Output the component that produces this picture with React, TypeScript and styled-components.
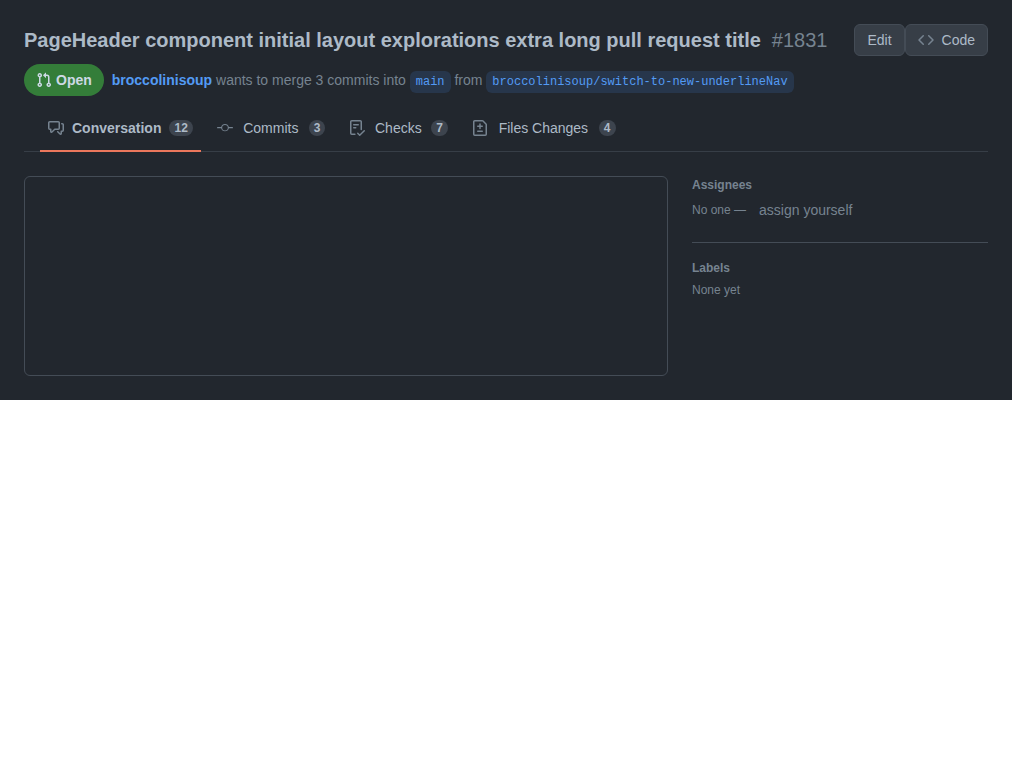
import React from "react";
import styled, { createGlobalStyle } from "styled-components";

const GlobalStyle = createGlobalStyle`
  *, *::before, *::after { box-sizing: border-box; }
  body {
    margin: 0;
    background: #ffffff;
    font-family: "Liberation Sans", Arial, sans-serif;
    font-size: 14px;
    line-height: 20px;
  }
`;

const Page = styled.div`
  display: flex;
  flex-direction: column;
  gap: 24px;
  padding: 24px;
  background: #22272e;
  color: #adbac7;
`;

const Header = styled.header`
  display: flex;
  flex-direction: column;
  gap: 8px;
`;

const TitleRow = styled.div`
  display: flex;
  align-items: flex-start;
`;

const Title = styled.h1`
  flex: 1;
  margin: 0;
  font-size: 20px;
  line-height: 32px;
  font-weight: 700;
`;

const Number = styled.span`
  margin-left: 11px;
  color: #768390;
  font-weight: 400;
`;

const Actions = styled.div`
  display: flex;
`;

const Button = styled.button`
  display: inline-flex;
  align-items: center;
  gap: 8px;
  height: 32px;
  padding: 0 12px;
  border: 1px solid #444c56;
  border-radius: 6px;
  background: #373e47;
  color: #adbac7;
  font: inherit;
  cursor: pointer;
`;

const Icon = styled.svg<{ $color?: string }>`
  flex: none;
  width: 16px;
  height: 16px;
  fill: ${(p) => p.$color ?? "#768390"};
`;

const Description = styled.div`
  display: flex;
  align-items: baseline;
  gap: 8px;
  color: #768390;
`;

const State = styled.span`
  display: inline-flex;
  align-items: center;
  gap: 4px;
  height: 32px;
  padding: 0 12px;
  border-radius: 16px;
  background: #347d39;
  color: #cdd9e5;
  font-weight: 700;
`;

/* Gives the badge its text baseline, which the summary beside it sits on. */
const StateLabel = styled.span`
  align-self: baseline;
  line-height: 32px;
`;

const Summary = styled.span`
  line-height: 20px;
`;

const Author = styled.a`
  color: #539bf5;
  font-weight: 700;
  text-decoration: none;
`;

const Branch = styled.a`
  display: inline-block;
  padding: 2px 6px;
  border-radius: 6px;
  background: #27364b;
  color: #539bf5;
  font-family: "Liberation Mono", monospace;
  font-size: 12px;
  line-height: 18px;
  text-decoration: none;
`;

const Tabs = styled.nav`
  display: flex;
  gap: 8px;
  height: 48px;
  padding-left: 16px;
  box-shadow: inset 0 -1px #373e47;
`;

const Tab = styled.a<{ $current: boolean }>`
  display: flex;
  align-items: center;
  gap: 8px;
  padding: 0 8px;
  color: #adbac7;
  font-weight: ${(p) => (p.$current ? 700 : 400)};
  text-decoration: none;
  box-shadow: ${(p) => (p.$current ? "inset 0 -2px #ec775c" : "none")};
`;

/* Reserves the bold width so that the tabs keep their size when selected. */
const TabLabel = styled.span`
  display: inline-flex;
  flex-direction: column;
  align-items: center;

  &::after {
    content: attr(data-label);
    height: 0;
    font-weight: 700;
    visibility: hidden;
  }
`;

const Counter = styled.span`
  padding: 2px 5px;
  border-radius: 8px;
  background: #3d444e;
  font-size: 12px;
  line-height: 12px;
  font-weight: 700;
`;

const Columns = styled.div`
  display: flex;
  align-items: flex-start;
  gap: 24px;
`;

const Content = styled.main`
  flex: 1;
  height: 200px;
  border: 1px solid #444c56;
  border-radius: 6px;
`;

const Sidebar = styled.aside`
  width: 296px;
  color: #768390;
  font-size: 12px;
  line-height: 18px;
`;

const Section = styled.section`
  & + & {
    margin-top: 16px;
    padding-top: 16px;
    border-top: 1px solid #444c56;
  }
`;

const SectionTitle = styled.h2`
  margin: 0;
  font-size: 12px;
  line-height: 18px;
  font-weight: 700;
`;

const AssigneeRow = styled.div`
  display: flex;
  align-items: center;
`;

const AssignButton = styled.button`
  height: 32px;
  padding: 0 12px;
  border: 1px solid transparent;
  border-radius: 6px;
  background: transparent;
  color: inherit;
  font: inherit;
  font-size: 14px;
  cursor: pointer;
`;

const Empty = styled.p`
  margin: 4px 0 0;
`;

const paths = {
  pull: "M7.177 3.073L9.573.677A.25.25 0 0110 .854v4.792a.25.25 0 01-.427.177L7.177 3.427a.25.25 0 010-.354zM3.75 2.5a.75.75 0 100 1.5.75.75 0 000-1.5zm-2.25.75a2.25 2.25 0 113 2.122v5.256a2.251 2.251 0 11-1.5 0V5.372A2.25 2.25 0 011.5 3.25zM11 2.5h-1V4h1a1 1 0 011 1v5.628a2.251 2.251 0 101.5 0V5A2.5 2.5 0 0011 2.5zm1 10.25a.75.75 0 111.5 0 .75.75 0 01-1.5 0zM3.75 12a.75.75 0 100 1.5.75.75 0 000-1.5z",
  discussion: "M1.75 1h8.5c.966 0 1.75.784 1.75 1.75v5.5A1.75 1.75 0 0 1 10.25 10H7.061l-2.574 2.573A1.458 1.458 0 0 1 2 11.543V10h-.25A1.75 1.75 0 0 1 0 8.25v-5.5C0 1.784.784 1 1.75 1ZM1.5 2.75v5.5c0 .138.112.25.25.25h1a.75.75 0 0 1 .75.75v2.19l2.72-2.72a.749.749 0 0 1 .53-.22h3.5a.25.25 0 0 0 .25-.25v-5.5a.25.25 0 0 0-.25-.25h-8.5a.25.25 0 0 0-.25.25Zm13 2a.25.25 0 0 0-.25-.25h-.5a.75.75 0 0 1 0-1.5h.5c.966 0 1.75.784 1.75 1.75v5.5A1.75 1.75 0 0 1 14.25 12H14v1.543a1.458 1.458 0 0 1-2.487 1.03L9.22 12.28a.749.749 0 0 1 .326-1.275.749.749 0 0 1 .734.215l2.22 2.22v-2.19a.75.75 0 0 1 .75-.75h1a.25.25 0 0 0 .25-.25Z",
  commit: "M11.87 8.3a4 4 0 0 1-7.74 0H.6a.6.6 0 0 1 0-1.2h3.53a4 4 0 0 1 7.74 0h3.53a.6.6 0 0 1 0 1.2Zm-1.07-.6a2.8 2.8 0 1 0-5.6 0 2.8 2.8 0 0 0 5.6 0Z",
  checklist: "M2.5 1.75v11.5c0 .138.112.25.25.25h3.17a.75.75 0 0 1 0 1.5H2.75A1.75 1.75 0 0 1 1 13.25V1.75C1 .784 1.784 0 2.75 0h8.5C12.216 0 13 .784 13 1.75v7.736a.75.75 0 0 1-1.5 0V1.75a.25.25 0 0 0-.25-.25h-8.5a.25.25 0 0 0-.25.25Zm13.274 9.537v-.001l-4.557 4.45a.75.75 0 0 1-1.055-.008l-1.943-1.95a.75.75 0 0 1 1.062-1.058l1.419 1.425 4.026-3.932a.75.75 0 1 1 1.048 1.074ZM4.75 4h4.5a.75.75 0 0 1 0 1.5h-4.5a.75.75 0 0 1 0-1.5ZM4 7.75A.75.75 0 0 1 4.75 7h2a.75.75 0 0 1 0 1.5h-2A.75.75 0 0 1 4 7.75Z",
  diff: "M2.75 1.5a.25.25 0 0 0-.25.25v12.5c0 .138.112.25.25.25h10.5a.25.25 0 0 0 .25-.25V4.664a.25.25 0 0 0-.073-.177l-2.914-2.914a.25.25 0 0 0-.177-.073ZM1 1.75C1 .784 1.784 0 2.75 0h7.586c.464 0 .909.184 1.237.513l2.914 2.914c.329.328.513.773.513 1.237v9.586A1.75 1.75 0 0 1 13.25 16H2.75A1.75 1.75 0 0 1 1 14.25Zm7 1.5a.75.75 0 0 1 .75.75v1.5h1.5a.75.75 0 0 1 0 1.5h-1.5v1.5a.75.75 0 0 1-1.5 0V7h-1.5a.75.75 0 0 1 0-1.5h1.5V4A.75.75 0 0 1 8 3.25Zm-3 8a.75.75 0 0 1 .75-.75h4.5a.75.75 0 0 1 0 1.5h-4.5a.75.75 0 0 1-.75-.75Z",
  code: "m11.28 3.22 4.25 4.25a.75.75 0 0 1 0 1.06l-4.25 4.25a.749.749 0 0 1-1.275-.326.749.749 0 0 1 .215-.734L13.94 8l-3.72-3.72a.749.749 0 0 1 .326-1.275.749.749 0 0 1 .734.215Zm-6.56 0a.751.751 0 0 1 1.042.018.751.751 0 0 1 .018 1.042L2.06 8l3.72 3.72a.749.749 0 0 1-.326 1.275.749.749 0 0 1-.734-.215L.47 8.53a.75.75 0 0 1 0-1.06Z",
};

type IconName = keyof typeof paths;

function Octicon({ name, color }: { name: IconName; color?: string }) {
  return (
    <Icon viewBox="0 0 16 16" aria-hidden="true" $color={color}>
      <path fillRule="evenodd" d={paths[name]} />
    </Icon>
  );
}

const tabs: { label: string; count: number; icon: IconName }[] = [
  { label: "Conversation", count: 12, icon: "discussion" },
  { label: "Commits", count: 3, icon: "commit" },
  { label: "Checks", count: 7, icon: "checklist" },
  { label: "Files Changes", count: 4, icon: "diff" },
];

export default function App() {
  return (
    <>
      <GlobalStyle />
      <Page>
        <Header>
          <TitleRow>
            <Title>
              PageHeader component initial layout explorations extra long pull request title
              <Number>#1831</Number>
            </Title>
            <Actions>
              <Button type="button">Edit</Button>
              <Button type="button">
                <Octicon name="code" />
                Code
              </Button>
            </Actions>
          </TitleRow>
          <Description>
            <State>
              <Octicon name="pull" color="#cdd9e5" />
              <StateLabel>Open</StateLabel>
            </State>
            <Summary>
              <Author href="#author">broccolinisoup</Author> wants to merge 3 commits into{" "}
              <Branch href="#main">main</Branch> from{" "}
              <Branch href="#branch">broccolinisoup/switch-to-new-underlineNav</Branch>
            </Summary>
          </Description>
          <Tabs aria-label="Pull request">
            {tabs.map((tab, i) => (
              <Tab
                key={tab.label}
                href={"#tab-" + i}
                $current={i === 0}
                aria-current={i === 0 ? "page" : undefined}
              >
                <Octicon name={tab.icon} />
                <TabLabel data-label={tab.label}>{tab.label}</TabLabel>
                <Counter>{tab.count}</Counter>
              </Tab>
            ))}
          </Tabs>
        </Header>
        <Columns>
          <Content />
          <Sidebar>
            <Section>
              <SectionTitle>Assignees</SectionTitle>
              <AssigneeRow>
                <span>No one —</span>
                <AssignButton type="button">assign yourself</AssignButton>
              </AssigneeRow>
            </Section>
            <Section>
              <SectionTitle>Labels</SectionTitle>
              <Empty>None yet</Empty>
            </Section>
          </Sidebar>
        </Columns>
      </Page>
    </>
  );
}
